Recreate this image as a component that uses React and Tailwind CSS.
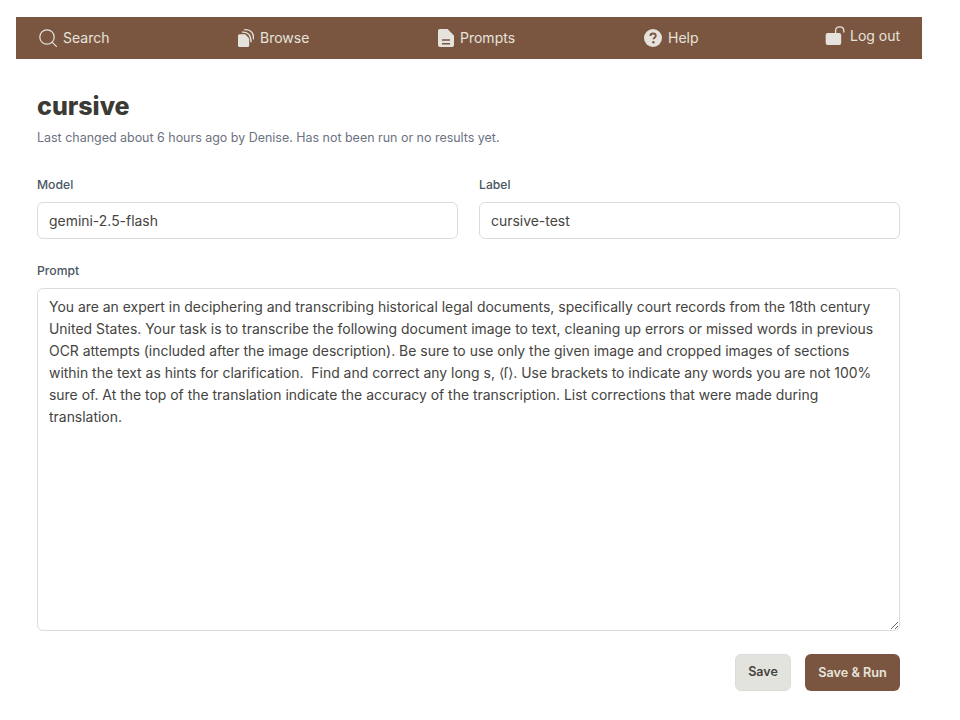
const inter = "font-['Inter',sans-serif]";

function SearchIcon() {
  return (
    <svg width="18" height="18" viewBox="0 0 18 18" fill="none" stroke="#e6e3dc" strokeWidth="1.2" strokeLinecap="round">
      <circle cx="8" cy="8" r="7.2" />
      <path d="M13.1 13.1 17.6 17.6" />
    </svg>
  );
}

function BrowseIcon() {
  return (
    <svg width="16" height="18" viewBox="0 0 16 18">
      <path fill="#e6e3dc" d="M1.600 5.200H7.200L11.200 9.600V16.400A1.600 1.600 0 0 1 9.600 18H1.600A1.600 1.600 0 0 1 0 16.400V6.800A1.600 1.600 0 0 1 1.600 5.200Z" />
      <path fill="none" stroke="#e6e3dc" strokeWidth="1.300" d="M3.800 3.200C7 2.800 9.500 3.800 11 5.500c1.600 1.900 2.100 4.200 2.100 7.800" />
      <path fill="none" stroke="#e6e3dc" strokeWidth="1.300" d="M6.200 .8C9.500.4 12 1.300 13.800 3.200c1.500 1.700 1.900 4 1.900 7.200" />
    </svg>
  );
}

function PromptsIcon() {
  return (
    <svg width="16" height="18" viewBox="0 0 16 18">
      <path fill="#e6e3dc" d="M2 0H9.500L16 6.500V16a2 2 0 0 1-2 2H2a2 2 0 0 1-2-2V2a2 2 0 0 1 2-2Z" />
      <path fill="#7a5640" d="M4 10.300h8v1.500H4zM4 14h8v1.500H4z" />
    </svg>
  );
}

function HelpIcon() {
  return (
    <svg width="18" height="18" viewBox="0 0 18 18">
      <circle cx="9" cy="9" r="9" fill="#e6e3dc" />
      <path d="M6.300 7c.1-1.600 1.200-2.500 2.800-2.500 1.600 0 2.700.9 2.700 2.200 0 1-.6 1.500-1.300 2-.7.500-1 .8-1 1.600" fill="none" stroke="#7a5640" strokeWidth="1.800" />
      <circle cx="9.400" cy="13.200" r="1.200" fill="#7a5640" />
    </svg>
  );
}

function LockIcon() {
  return (
    <svg width="20" height="20" viewBox="0 0 20 20">
      <rect x="0.700" y="7" width="15.500" height="12" rx="2" fill="#e6e3dc" />
      <path d="M10.600 7.500V4.500C10.600 2.200 12.200 .8 14.700 .8c2.500 0 4.100 1.400 4.100 3.700V6" fill="none" stroke="#e6e3dc" strokeWidth="1.300" strokeLinecap="round" />
    </svg>
  );
}

function NavItem({ icon, label, className }) {
  return (
    <a className={`flex items-center ${className}`}>
      {icon}
      <span>{label}</span>
    </a>
  );
}

function Field({ label, value }) {
  return (
    <div className="flex-1">
      <label className="block text-[12.2px] font-medium text-[#4b5563] mb-[9px] leading-[16px]">{label}</label>
      <input
        readOnly
        value={value}
        className="block w-full h-[37px] px-[11px] bg-white border border-[#dcdcdc] rounded-md text-[13.95px] text-[#45443f] outline-none"
      />
    </div>
  );
}

const promptText =
  "You are an expert in deciphering and transcribing historical legal documents, specifically court records from the 18th century United States. Your task is to transcribe the following document image to text, cleaning up errors or missed words in previous OCR attempts (included after the image description). Be sure to use only the given image and cropped images of sections within the text as hints for clarification.  Find and correct any long s, \u27E8\u017F\u27E9. Use brackets to indicate any words you are not 100% sure of. At the top of the translation indicate the accuracy of the transcription. List corrections that were made during translation.";

export default function App() {
  return (
    <div className={`${inter} bg-white min-h-[720px] pt-[17px] pl-4 w-[960px]`}>
      <div className="w-[906px]">
        <nav className="h-[42px] bg-[#7a5640] flex items-center pl-[23px] text-sm text-[#e6e3dc]">
          <NavItem icon={<SearchIcon />} label="Search" className="w-[199px] gap-[6px]" />
          <NavItem icon={<BrowseIcon />} label="Browse" className="w-[200px] gap-[6px]" />
          <NavItem icon={<PromptsIcon />} label="Prompts" className="w-[206px] gap-[6px]" />
          <NavItem icon={<HelpIcon />} label="Help" className="w-[181px] gap-[6px]" />
          <NavItem icon={<LockIcon />} label="Log out" className="gap-[5px] -translate-y-[2px]" />
        </nav>

        <main className="pl-[21px] pr-[22px]">
          <h1 className="mt-[31px] text-[25px] leading-[32px] font-extrabold text-[#3b3a35]">cursive</h1>
          <p className="mt-2 text-[12.46px] leading-[16px] text-[#6b7280]">
            Last changed about 6 hours ago by Denise. Has not been run or no results yet.
          </p>

          <div className="mt-[31px] flex gap-[21px]">
            <Field label="Model" value="gemini-2.5-flash" />
            <Field label="Label" value="cursive-test" />
          </div>

          <label className="block mt-6 text-[12.2px] font-medium text-[#4b5563] leading-[16px] mb-[9px]">Prompt</label>
          <textarea
            readOnly
            value={promptText}
            className="block w-full h-[343px] px-[11px] py-[7px] bg-white border border-[#dcdcdc] rounded-md text-[13.95px] leading-[22px] text-[#45443f] outline-none"
          />

          <div className="mt-[23px] flex justify-end gap-[14px]">
            <button className="h-[37px] w-[56px] rounded-md bg-[#e3e3de] border border-[#dcdcdc] text-[12.5px] font-semibold text-[#45443f]">
              Save
            </button>
            <button className="h-[37px] w-[95px] rounded-md bg-[#7a5640] text-[12.7px] font-semibold text-[#e6e3dc]">
              Save &amp; Run
            </button>
          </div>
        </main>
      </div>
    </div>
  );
}
